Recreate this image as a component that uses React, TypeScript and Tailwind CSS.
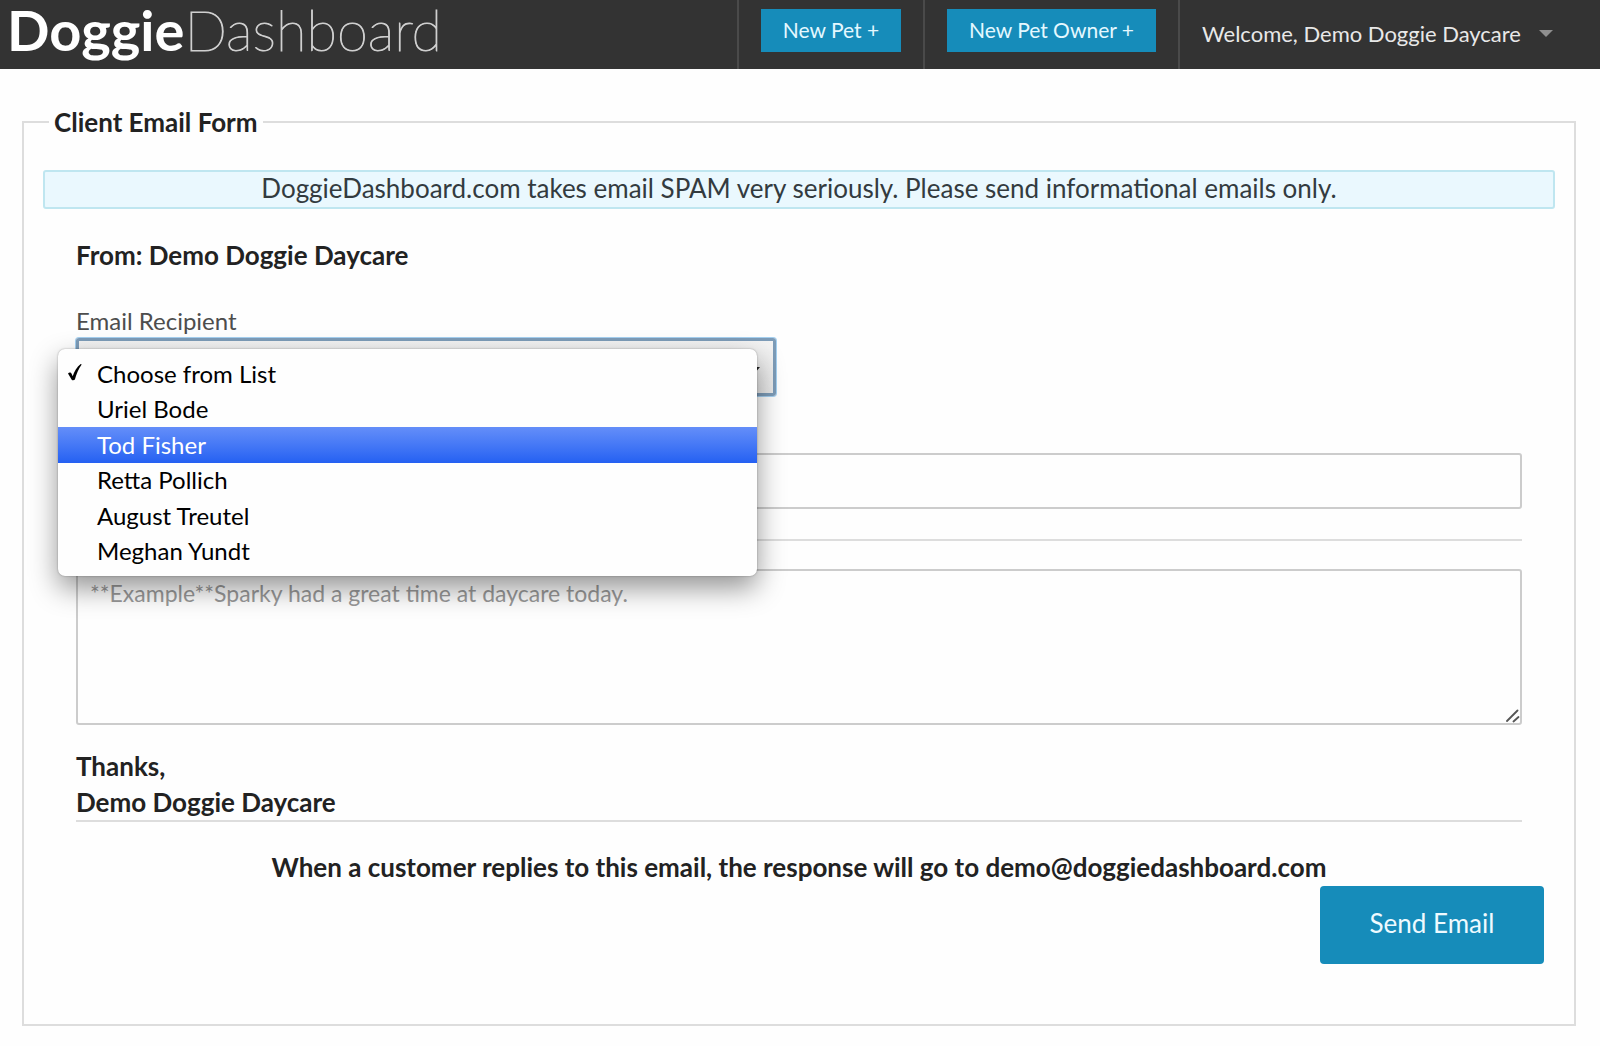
import { useState } from 'react'

const recipients = ['Choose from List', 'Uriel Bode', 'Tod Fisher', 'Retta Pollich', 'August Treutel', 'Meghan Yundt']

function Header() {
    return (
        <header className="w-full h-[69px] flex items-stretch justify-between bg-[#333333] text-white">
            <a href="#" className="pl-[7px] text-[56px] leading-[60px] whitespace-nowrap">
                <span className="font-bold">Doggie</span><span className="font-thin [-webkit-text-stroke:1px_#cfcfcf]">Dashboard</span>
            </a>
            <nav className="flex items-stretch text-[21px] whitespace-nowrap">
                <div className="border-l-2 border-[#4a4a4a] px-[22px] pt-[9px]">
                    <button type="button" className="w-[140px] h-[43px] pb-[2px] bg-[#168cba] text-[#e4f8ff]">New Pet +</button>
                </div>
                <div className="border-l-2 border-[#4a4a4a] px-[22px] pt-[9px]">
                    <button type="button" className="w-[209px] h-[43px] pb-[2px] bg-[#168cba] text-[#e4f8ff]">New Pet Owner +</button>
                </div>
                <div className="w-[422px] border-l-2 border-[#4a4a4a] pl-[22px] pr-[47px] flex">
                    <button type="button" className="w-full pb-[2px] flex items-center justify-between text-[22px] text-[#e8e8e8]">
                        Welcome, Demo Doggie Daycare
                        <svg width="14" height="7" viewBox="0 0 14 7"><path d="M0 0h14L7 7z" fill="#8f8f8f" /></svg>
                    </button>
                </div>
            </nav>
        </header>
    )
}

function RecipientSelect() {
    const [selected, setSelected] = useState(recipients[0])
    const [active, setActive] = useState('Tod Fisher')

    return (
        <div className="relative w-[700px]">
            <select
                id="recipient"
                value={selected}
                onChange={(e) => setSelected(e.target.value)}
                className="block w-full h-[58px] px-3 appearance-none rounded-[3px] border-3 border-[#7d9cb8] bg-linear-to-b from-[#f3f3f3] to-[#e9e9e9] text-[#f0f0f0] ring-1 ring-[#a5d0f0] outline-none"
            >
                {recipients.map((name) => <option key={name}>{name}</option>)}
            </select>
            <svg className="absolute right-[16px] top-[29px] pointer-events-none" width="12" height="7" viewBox="0 0 12 7"><path d="M0 0h12L6 7z" fill="#222222" /></svg>

            {/* Open list */}
            <ul role="listbox" aria-label="Email Recipient" className="absolute z-10 -left-[18px] top-[11px] w-[699px] h-[227px] py-[7px] flex flex-col rounded-[7px] bg-[#fefefe] text-black shadow-[0_12px_28px_rgba(0,0,0,0.42),0_0_2px_rgba(0,0,0,0.35)]">
                {recipients.map((name) => (
                    <li
                        key={name}
                        role="option"
                        aria-selected={name === selected}
                        onMouseEnter={() => setActive(name)}
                        onClick={() => setSelected(name)}
                        className={`flex-1 flex items-center pl-[9px] text-[24px] leading-8 ${name === active ? 'bg-linear-to-b from-[#648ef9] to-[#2460f2] text-white' : ''}`}
                    >
                        <span className="w-[30px] pb-[4px] flex">
                            {name === selected && (
                                <svg width="16" height="18" viewBox="0 0 16 18"><path d="M1 10.500c1.300-1.700 2.900-1.300 3.500.1l1.200 2.600C7.300 8.600 9.700 4 13.700.9l1 .5c-3 4.300-5.400 9.300-6.800 15.200-.8.900-2.500 1-3.200.2z" fill="#000000" /></svg>
                            )}
                        </span>
                        {name}
                    </li>
                ))}
            </ul>
        </div>
    )
}

function App() {
    return (
        <div className="w-full min-h-screen bg-[#fefefe] font-['Lato','Open_Sans',sans-serif] text-[#222222]">
            <Header />
            <form className="pt-[35px] pb-5 pl-[22px] pr-6" onSubmit={(e) => e.preventDefault()}>
                <fieldset className="min-w-0 border-2 border-[#dddddd] px-[19px] pb-[60px] text-[26px] leading-9">
                    <legend className="ml-[6px] px-[5px] font-bold">Client Email Form</legend>
                    <p className="mt-[30px] h-[39px] border-2 border-[#bfe6f0] rounded-[3px] bg-[#eaf8fe] text-center leading-8 text-[#333b3f]">
                        DoggieDashboard.com takes email SPAM very seriously. Please send informational emails only.
                    </p>
                    <div className="px-[33px]">
                        <p className="mt-[28px] font-bold">From: Demo Doggie Daycare</p>
                        <label htmlFor="recipient" className="mt-[32px] block w-fit text-[24px] leading-8 text-[#4d4d4d]">Email Recipient</label>
                        <div className="pt-px">
                            <RecipientSelect />
                        </div>
                        <input type="text" aria-label="Subject" className="mt-[57px] block w-full h-[56px] px-3 rounded-[3px] border-2 border-[#cccccc] text-[24px]" />
                        <hr className="mt-[30px] border-t-2 border-[#dddddd]" />
                        <div className="relative mt-[28px]">
                            <textarea
                                aria-label="Message"
                                placeholder="**Example**Sparky had a great time at daycare today."
                                className="block w-full h-[156px] px-[12px] py-[6px] resize-none rounded-[3px] border-2 border-[#cccccc] text-[23px] leading-8 placeholder:text-[#999999]"
                            />
                            <svg className="absolute right-[2px] bottom-[2px] pointer-events-none" width="14" height="14" viewBox="0 0 14 14" fill="none" stroke="#555555" strokeWidth="1.800" strokeLinecap="round"><path d="M1 12 11.500 1.500M7.500 12.500l5-4.500" /></svg>
                        </div>
                        <p className="mt-[23px] font-bold">Thanks,<br />Demo Doggie Daycare</p>
                        <hr className="border-t-2 border-[#dddddd]" />
                        <p className="mt-[27px] mb-px text-center font-bold">When a customer replies to this email, the response will go to demo@doggiedashboard.com</p>
                    </div>
                    <div className="flex justify-end pr-[11px]">
                        <button type="submit" className="w-[224px] h-[78px] pb-[4px] rounded-[4px] bg-[#168cba] text-[#eefaff]">Send Email</button>
                    </div>
                </fieldset>
            </form>
        </div>
    )
}

export default App
